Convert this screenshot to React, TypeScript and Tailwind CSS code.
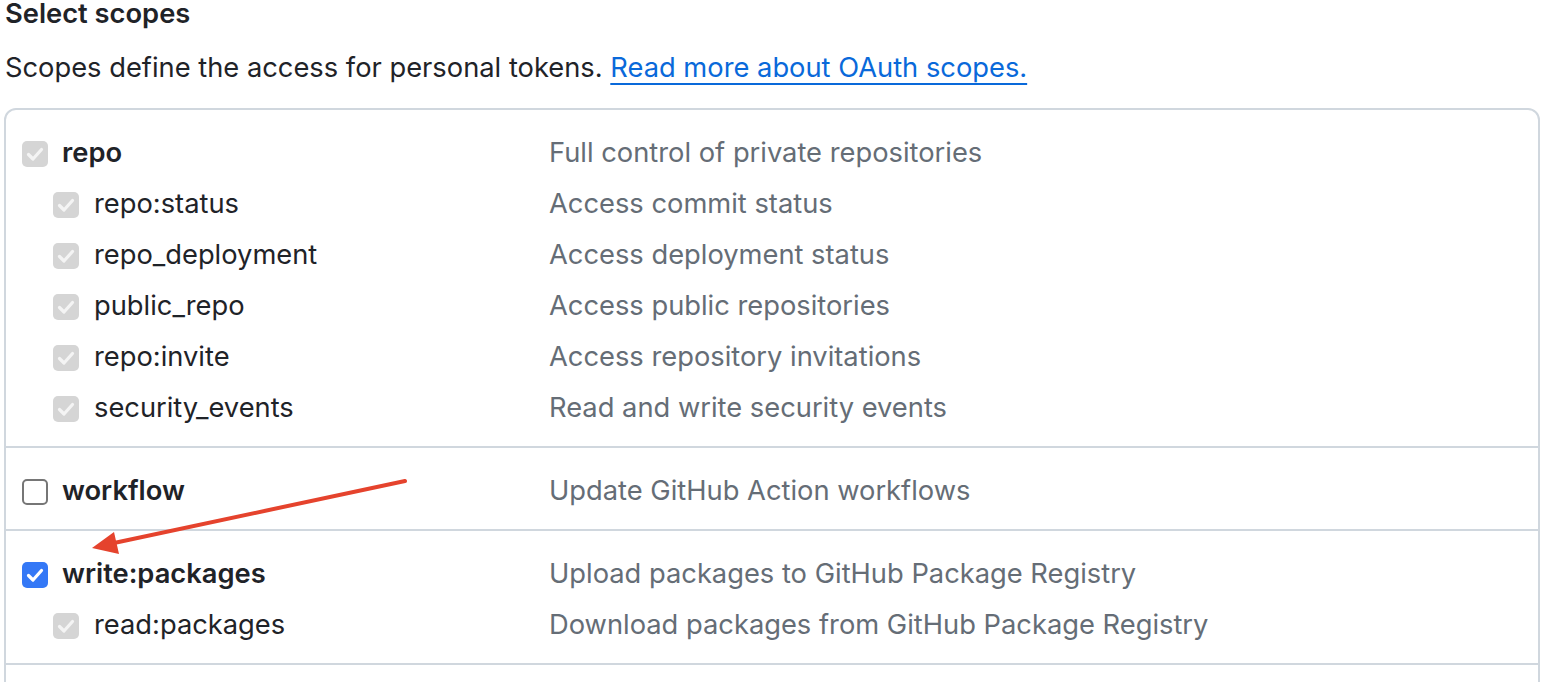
import React from 'react';

type Scope = {
  name: string;
  description: string;
  state: 'disabled' | 'checked' | 'unchecked';
  sub?: boolean;
};

const SECTIONS: Scope[][] = [
  [
    { name: 'repo', description: 'Full control of private repositories', state: 'disabled' },
    { name: 'repo:status', description: 'Access commit status', state: 'disabled', sub: true },
    { name: 'repo_deployment', description: 'Access deployment status', state: 'disabled', sub: true },
    { name: 'public_repo', description: 'Access public repositories', state: 'disabled', sub: true },
    { name: 'repo:invite', description: 'Access repository invitations', state: 'disabled', sub: true },
    { name: 'security_events', description: 'Read and write security events', state: 'disabled', sub: true },
  ],
  [{ name: 'workflow', description: 'Update GitHub Action workflows', state: 'unchecked' }],
  [
    { name: 'write:packages', description: 'Upload packages to GitHub Package Registry', state: 'checked' },
    { name: 'read:packages', description: 'Download packages from GitHub Package Registry', state: 'disabled', sub: true },
  ],
];

const Check = ({ color }: { color: string }) => (
  <svg viewBox="0 0 26 26" className="w-[26px] h-[26px]">
    <path d="M6.5 13.5 L11 18 L19.5 8.5" fill="none" stroke={color} strokeWidth="3.2" strokeLinecap="round" strokeLinejoin="round" />
  </svg>
);

const Checkbox = ({ state }: { state: Scope['state'] }) => {
  if (state === 'disabled') {
    return (
      <span className="w-[26px] h-[26px] shrink-0 rounded-[5px] bg-[#d5d5d5] flex items-center justify-center">
        <Check color="#f4f4f4" />
      </span>
    );
  }
  if (state === 'checked') {
    return (
      <span className="w-[26px] h-[26px] shrink-0 rounded-[5px] bg-[#3478f6] flex items-center justify-center">
        <Check color="#ffffff" />
      </span>
    );
  }
  return <span className="w-[26px] h-[26px] shrink-0 rounded-[5px] bg-white border-[2px] border-[#767676]" />;
};

const ScopeRow = ({ scope }: { scope: Scope }) => (
  <div className="flex items-center h-[51px]">
    <div className={`w-[527px] flex items-center ${scope.sub ? 'pl-[31px] gap-[15px]' : 'gap-[14px]'}`}>
      <Checkbox state={scope.state} />
      <span className={`text-[27.3px] text-[#1f2328] ${scope.sub ? 'font-normal' : 'font-semibold'}`}>{scope.name}</span>
    </div>
    <span className="text-[27.3px] text-[#656d76]">{scope.description}</span>
  </div>
);

export default function App() {
  return (
    <div
      className="relative h-[682px] overflow-hidden bg-white px-[4px]"
      style={{ fontFamily: 'Inter, "Noto Sans", sans-serif' }}
    >
      <h2 className="-mt-[4px] ml-[1px] text-[27.3px] leading-[36px] font-semibold text-[#1f2328]">Select scopes</h2>
      <p className="mt-[18px] ml-[1px] text-[27.3px] leading-[36px] text-[#1f2328]">
        Scopes define the access for personal tokens.{' '}
        <a href="#" className="text-[#0969da] underline underline-offset-[6px] decoration-[2px]">
          Read more about OAuth scopes.
        </a>
      </p>

      <div className="mt-[22px] w-[1536px] border-[2px] border-[#d0d7de] rounded-[12px]">
        {SECTIONS.map((section, i) => (
          <div key={i} className={`pt-[18px] pb-[12px] pl-[16px] ${i > 0 ? 'border-t-[2px] border-[#d0d7de]' : ''}`}>
            {section.map((scope) => (
              <ScopeRow key={scope.name} scope={scope} />
            ))}
          </div>
        ))}
        <div className="h-[40px] border-t-[2px] border-[#d0d7de]" />
      </div>

      {/* annotation arrow */}
      <svg className="absolute left-0 top-0 pointer-events-none" width="1546" height="682">
        <line x1="405" y1="481" x2="114" y2="543" stroke="#e5432d" strokeWidth="4" strokeLinecap="round" />
        <polygon points="92,548 114,532 119,554" fill="#e5432d" />
      </svg>
    </div>
  );
}
